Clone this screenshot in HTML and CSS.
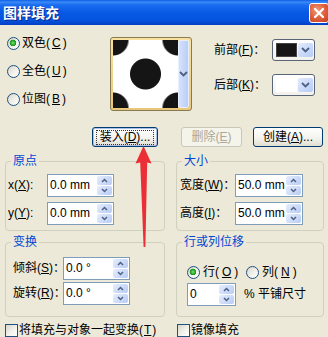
FILE: index.html
```html
<!DOCTYPE html>
<html>
<head>
<meta charset="utf-8">
<link rel="stylesheet" href="styles.css">
</head>
<body>
<div class="win">
  <div class="titlebar">
    <span class="title">图样填充</span>
    <span class="close"><svg width="12" height="12" viewBox="0 0 12 12"><path d="M2 2 L10 10 M10 2 L2 10" stroke="#fff" stroke-width="2.2" stroke-linecap="round"/></svg></span>
  </div>
  <div class="body">
    <div class="top">
      <div class="modes">
        <label class="opt"><span class="rb on"></span>双色(<u>C</u>)</label>
        <label class="opt"><span class="rb"></span>全色(<u>U</u>)</label>
        <label class="opt"><span class="rb"></span>位图(<u>B</u>)</label>
      </div>
      <div class="pattern">
        <div class="swatch"></div>
        <div class="pdrop"><svg width="9" height="6" viewBox="0 0 9 6"><path d="M1 1 L4.5 4.5 L8 1" fill="none" stroke="#4d6185" stroke-width="1.8"/></svg></div>
      </div>
      <div class="colors">
        <span class="clabel">前部(<u>F</u>)：</span>
        <span class="cbtn"><span class="csw black"></span><span class="carrow"><svg width="9" height="6" viewBox="0 0 9 6"><path d="M1 1 L4.5 4.5 L8 1" fill="none" stroke="#4d6185" stroke-width="1.8"/></svg></span></span>
        <span class="clabel">后部(<u>K</u>)：</span>
        <span class="cbtn"><span class="csw white"></span><span class="carrow"><svg width="9" height="6" viewBox="0 0 9 6"><path d="M1 1 L4.5 4.5 L8 1" fill="none" stroke="#4d6185" stroke-width="1.8"/></svg></span></span>
      </div>
    </div>
    <div class="btnrow">
      <button class="btn load"><span class="focus">装入(<u>D</u>)...</span></button>
      <button class="btn del" disabled>删除(<u>E</u>)</button>
      <button class="btn create">创建(<u>A</u>)...</button>
    </div>
    <div class="groups">
      <fieldset class="grp">
        <legend>原点</legend>
        <div class="fields origin">
          <span class="lbl">x(<u>X</u>):</span>
          <div class="spinbox"><span class="val">0.0 mm</span><span class="spin"><span><svg width="7" height="5" viewBox="0 0 7 5"><path d="M1 4 L3.5 1.5 L6 4" fill="none" stroke="#4d6185" stroke-width="1.5"/></svg></span><span><svg width="7" height="5" viewBox="0 0 7 5"><path d="M1 1 L3.5 3.5 L6 1" fill="none" stroke="#4d6185" stroke-width="1.5"/></svg></span></span></div>
          <span class="lbl">y(<u>Y</u>):</span>
          <div class="spinbox"><span class="val">0.0 mm</span><span class="spin"><span><svg width="7" height="5" viewBox="0 0 7 5"><path d="M1 4 L3.5 1.5 L6 4" fill="none" stroke="#4d6185" stroke-width="1.5"/></svg></span><span><svg width="7" height="5" viewBox="0 0 7 5"><path d="M1 1 L3.5 3.5 L6 1" fill="none" stroke="#4d6185" stroke-width="1.5"/></svg></span></span></div>
        </div>
      </fieldset>
      <fieldset class="grp">
        <legend>大小</legend>
        <div class="fields size">
          <span class="lbl">宽度(<u>W</u>)：</span>
          <div class="spinbox"><span class="val">50.0 mm</span><span class="spin"><span><svg width="7" height="5" viewBox="0 0 7 5"><path d="M1 4 L3.5 1.5 L6 4" fill="none" stroke="#4d6185" stroke-width="1.5"/></svg></span><span><svg width="7" height="5" viewBox="0 0 7 5"><path d="M1 1 L3.5 3.5 L6 1" fill="none" stroke="#4d6185" stroke-width="1.5"/></svg></span></span></div>
          <span class="lbl">高度(<u>I</u>)：</span>
          <div class="spinbox"><span class="val">50.0 mm</span><span class="spin"><span><svg width="7" height="5" viewBox="0 0 7 5"><path d="M1 4 L3.5 1.5 L6 4" fill="none" stroke="#4d6185" stroke-width="1.5"/></svg></span><span><svg width="7" height="5" viewBox="0 0 7 5"><path d="M1 1 L3.5 3.5 L6 1" fill="none" stroke="#4d6185" stroke-width="1.5"/></svg></span></span></div>
        </div>
      </fieldset>
      <fieldset class="grp">
        <legend>变换</legend>
        <div class="fields xform">
          <span class="lbl">倾斜(<u>S</u>)：</span>
          <div class="spinbox"><span class="val">0.0 °</span><span class="spin"><span><svg width="7" height="5" viewBox="0 0 7 5"><path d="M1 4 L3.5 1.5 L6 4" fill="none" stroke="#4d6185" stroke-width="1.5"/></svg></span><span><svg width="7" height="5" viewBox="0 0 7 5"><path d="M1 1 L3.5 3.5 L6 1" fill="none" stroke="#4d6185" stroke-width="1.5"/></svg></span></span></div>
          <span class="lbl">旋转(<u>R</u>)：</span>
          <div class="spinbox"><span class="val">0.0 °</span><span class="spin"><span><svg width="7" height="5" viewBox="0 0 7 5"><path d="M1 4 L3.5 1.5 L6 4" fill="none" stroke="#4d6185" stroke-width="1.5"/></svg></span><span><svg width="7" height="5" viewBox="0 0 7 5"><path d="M1 1 L3.5 3.5 L6 1" fill="none" stroke="#4d6185" stroke-width="1.5"/></svg></span></span></div>
        </div>
      </fieldset>
      <fieldset class="grp">
        <legend>行或列位移</legend>
        <div class="fields offset">
          <div class="rrow">
            <label class="opt2 first"><span class="rb on"></span>行(<u>O</u>)</label>
            <label class="opt2"><span class="rb"></span>列(<u>N</u>)</label>
          </div>
          <div class="irow">
            <div class="spinbox small"><span class="val">0</span><span class="spin"><span><svg width="7" height="5" viewBox="0 0 7 5"><path d="M1 4 L3.5 1.5 L6 4" fill="none" stroke="#4d6185" stroke-width="1.5"/></svg></span><span><svg width="7" height="5" viewBox="0 0 7 5"><path d="M1 1 L3.5 3.5 L6 1" fill="none" stroke="#4d6185" stroke-width="1.5"/></svg></span></span></div>
            <span class="pct">% 平铺尺寸</span>
          </div>
        </div>
      </fieldset>
    </div>
    <div class="checks">
      <label class="chk"><span class="cb"></span>将填充与对象一起变换(<u>T</u>)</label>
      <label class="chk second"><span class="cb"></span>镜像填充</label>
    </div>
  </div>
  <svg class="arrow" width="328" height="337" viewBox="0 0 328 337"><path d="M143.5 146 L151.5 163.5 L147.2 162.5 L145.4 247 L143.6 247 L140.2 162.5 L135.5 163.5 Z" fill="#ea3036"/></svg>
</div>
</body>
</html>
```

FILE: styles.css
```css
* { box-sizing: border-box; }
html, body { margin: 0; padding: 0; }
body {
  font-family: "Liberation Sans", "Noto Sans CJK SC", sans-serif;
  font-size: 12px;
  line-height: 15px;
  color: #000;
  background: #ece9d8;
}
.win {
  position: relative;
  width: 328px;
  height: 337px;
  overflow: hidden;
  background: #ece9d8;
}
.titlebar {
  height: 25px;
  display: flex;
  align-items: center;
  justify-content: space-between;
  padding-left: 3px;
  background: linear-gradient(to bottom, #0a5fe6 0%, #3b8af6 8%, #1a6cf0 20%, #0859e4 50%, #0454e0 80%, #0340c6 100%);
}
.title {
  color: #fff;
  font-family: "Noto Sans CJK SC", sans-serif;
  font-weight: 700;
  font-size: 14px;
  text-shadow: 1px 1px 0 #0b2a8a;
}
.close {
  width: 20px;
  height: 20px;
  margin-right: -1px;
  border: 1px solid #fff;
  border-radius: 3px;
  background: radial-gradient(circle at 40% 35%, #f09a7a 0%, #e0603e 50%, #c2401f 100%);
  display: flex;
  align-items: center;
  justify-content: center;
}
.body { padding-left: 5px; }
.top {
  display: grid;
  grid-template-columns: 105px 82px auto;
  height: 102px;
}
.modes {
  display: flex;
  flex-direction: column;
  padding-top: 4px;
  padding-left: 2px;
}
.opt {
  height: 28px;
  display: flex;
  align-items: center;
  gap: 2px;
  white-space: nowrap;
}
.rb {
  width: 13px;
  height: 13px;
  border-radius: 50%;
  border: 1px solid #1c5180;
  background: linear-gradient(135deg, #d8d5ca 0%, #f4f3ee 60%, #fff 100%);
  flex: none;
}
.rb.on {
  background: radial-gradient(circle at 45% 45%, #7be27b 0, #2fad2f 2px, #1f941f 3px, transparent 3.6px), linear-gradient(135deg, #d8d5ca 0%, #f4f3ee 60%, #fff 100%);
}
.pattern {
  margin-top: 12px;
  width: 82px;
  height: 74px;
  border: 1px solid #8a7a52;
  border-radius: 3px;
  padding: 2px;
  background: linear-gradient(#f8e2a0, #e8c77a);
  display: flex;
}
.swatch {
  width: 65px;
  height: 100%;
  background-color: #fff;
  background-image: radial-gradient(circle at center, #151515 0 15px, transparent 16px), radial-gradient(circle at center, #151515 0 15px, transparent 16px);
  background-size: 65px 68px;
  background-position: 0 0, 32.5px 34px;
}
.pdrop {
  flex: 1;
  background: linear-gradient(to right, #d6e2fc, #b9cdf7);
  border: 1px solid #e8effc;
  border-radius: 2px;
  display: flex;
  align-items: center;
  justify-content: center;
}
.colors {
  display: grid;
  grid-template-columns: 58px 43px;
  grid-auto-rows: 22px;
  row-gap: 13px;
  padding-left: 22px;
  padding-top: 14px;
  align-items: center;
}
.clabel { white-space: nowrap; }
.cbtn {
  height: 22px;
  border: 1px solid #5a6578;
  border-radius: 3px;
  background: linear-gradient(#fff, #f2f1ec);
  display: flex;
  padding: 3px 1px 3px 3px;
  gap: 1px;
}
.csw { flex: 1; }
.csw.black { background: #151515; border: 1px solid #444; }
.csw.white { background: #fff; }
.carrow {
  width: 15px;
  border-radius: 2px;
  background: linear-gradient(135deg, #e3ebfd, #b7caf5);
  display: flex;
  align-items: center;
  justify-content: center;
}
.btnrow {
  display: flex;
  height: 20px;
}
.btn {
  font: inherit;
  height: 20px;
  padding: 0;
  border: 1px solid #003c74;
  border-radius: 3px;
  background: linear-gradient(#ffffff 0%, #f4f3ee 55%, #e2ded2 100%);
  color: #000;
  display: flex;
  align-items: center;
  justify-content: center;
  white-space: nowrap;
}
.load {
  margin-left: 87px;
  width: 66px;
  box-shadow: inset 0 0 0 1px #a9bfea;
}
.load .focus {
  border: 1px dotted #333;
  padding: 0 3px;
  line-height: 13px;
}
.del {
  margin-left: 23px;
  width: 61px;
  border-color: #c9c7ba;
  background: #f5f4ea;
  color: #aca899;
}
.create {
  margin-left: 11px;
  width: 70px;
}
.groups {
  display: grid;
  grid-template-columns: 160px 148px;
  column-gap: 11px;
  row-gap: 4px;
  margin-top: 7px;
}
.grp {
  margin: 0;
  padding: 0;
  min-width: 0;
  border: 1px solid #d0d0bf;
  border-radius: 4px;
}
.grp legend {
  color: #0046d5;
  padding: 0 2px;
  margin-left: 5px;
  line-height: 15px;
}
.fields {
  display: grid;
  grid-auto-rows: 23px;
  align-items: center;
}
.lbl { white-space: nowrap; }
.origin {
  grid-template-columns: 39px 67px;
  row-gap: 5px;
  padding: 5px 0 5px 2px;
}
.size {
  grid-template-columns: 55px 68px;
  row-gap: 5px;
  padding: 5px 0 5px 3px;
}
.xform {
  grid-template-columns: 50px 67px;
  row-gap: 2px;
  padding: 7px 0 11px 7px;
}
.spinbox {
  height: 23px;
  border: 1px solid #7f9db9;
  background: #fff;
  display: flex;
  align-items: center;
  padding: 1px 1px 1px 2px;
}
.val {
  flex: 1;
  font-size: 12px;
  white-space: nowrap;
}
.spin {
  width: 15px;
  height: 100%;
  display: flex;
  flex-direction: column;
  gap: 1px;
}
.spin span {
  flex: 1;
  border-radius: 2px;
  background: linear-gradient(135deg, #e6eefd, #b8cbf4);
  display: flex;
  align-items: center;
  justify-content: center;
}
.offset {
  display: block;
  padding: 11px 0 10px 10px;
}
.rrow {
  display: flex;
  height: 22px;
  align-items: center;
}
.opt2 {
  display: flex;
  align-items: center;
  gap: 3px;
  white-space: nowrap;
}
.opt2.first { width: 59px; }
.irow {
  display: flex;
  align-items: center;
  height: 23px;
}
.spinbox.small { width: 49px; }
.pct { margin-left: 8px; white-space: nowrap; }
.checks {
  display: grid;
  grid-template-columns: 160px 148px;
  column-gap: 11px;
  margin-top: 7px;
}
.chk {
  display: flex;
  align-items: center;
  gap: 1px;
  height: 13px;
  white-space: nowrap;
}
.chk.second { padding-left: 1px; }
.cb {
  width: 13px;
  height: 13px;
  border: 1px solid #1c5180;
  background: linear-gradient(135deg, #d8d5ca 0%, #f4f3ee 60%, #fff 100%);
  flex: none;
}
.arrow {
  position: absolute;
  left: 0;
  top: 0;
  pointer-events: none;
}
```
